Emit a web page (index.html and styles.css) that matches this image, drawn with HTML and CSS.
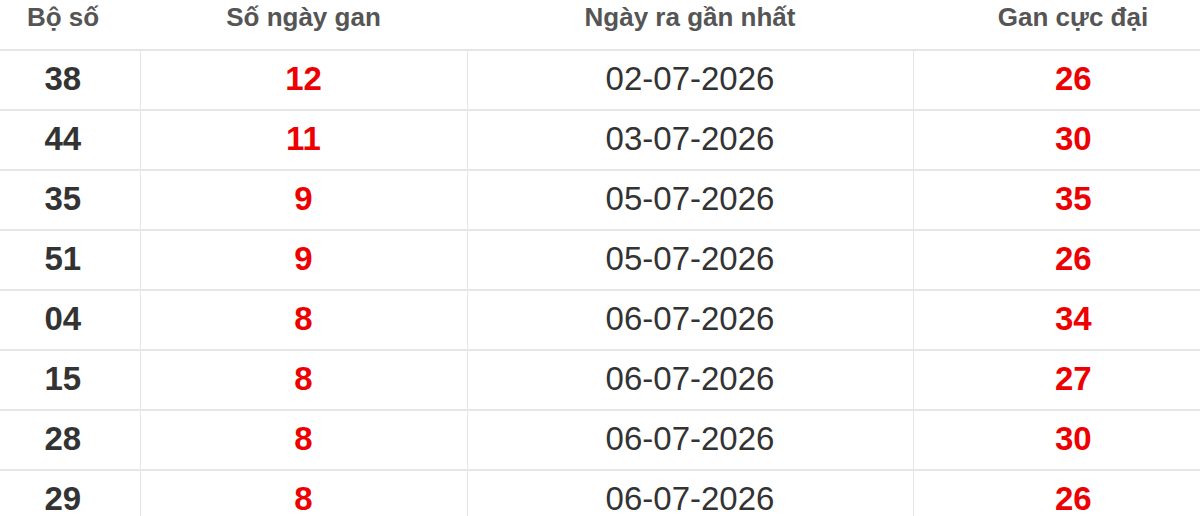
FILE: index.html
```html
<!DOCTYPE html>
<html>
<head>
<meta charset="utf-8">
<link rel="stylesheet" href="styles.css">
</head>
<body>
<div class="wrap">
<table class="gan">
  <thead>
    <tr><th class="c1">Bộ số</th><th class="c2">Số ngày gan</th><th class="c3">Ngày ra gần nhất</th><th class="c4">Gan cực đại</th></tr>
  </thead>
  <tbody>
    <tr><td class="num">38</td><td class="red">12</td><td class="date">02-07-2026</td><td class="red">26</td></tr>
    <tr><td class="num">44</td><td class="red">11</td><td class="date">03-07-2026</td><td class="red">30</td></tr>
    <tr><td class="num">35</td><td class="red">9</td><td class="date">05-07-2026</td><td class="red">35</td></tr>
    <tr><td class="num">51</td><td class="red">9</td><td class="date">05-07-2026</td><td class="red">26</td></tr>
    <tr><td class="num">04</td><td class="red">8</td><td class="date">06-07-2026</td><td class="red">34</td></tr>
    <tr><td class="num">15</td><td class="red">8</td><td class="date">06-07-2026</td><td class="red">27</td></tr>
    <tr><td class="num">28</td><td class="red">8</td><td class="date">06-07-2026</td><td class="red">30</td></tr>
    <tr><td class="num">29</td><td class="red">8</td><td class="date">06-07-2026</td><td class="red">26</td></tr>
  </tbody>
</table>
</div>
</body>
</html>
```

FILE: styles.css
```css
html, body {
  margin: 0;
  padding: 0;
  background: #fff;
  overflow: hidden;
}
.wrap {
  width: 1200px;
  height: 516px;
  overflow: hidden;
}
.gan {
  margin-left: -14px;
  width: 1247px;
  border-collapse: collapse;
  table-layout: fixed;
  font-family: "Liberation Sans", Arial, sans-serif;
}
.gan th {
  height: 50px;
  padding: 0 0 14px 0;
  font-size: 26px;
  font-weight: bold;
  color: #555;
  text-align: center;
  vertical-align: middle;
  border-bottom: 2px solid #e6e6e6;
  box-sizing: border-box;
}
.c1 { width: 154px; }
.c2 { width: 327px; }
.c3 { width: 446px; }
.c4 { width: 320px; }
.gan td {
  height: 56px;
  padding: 0 0 2px 0;
  text-align: center;
  vertical-align: middle;
  font-size: 33px;
  border-bottom: 2px solid #e6e6e6;
  border-left: 1px solid #e6e6e6;
}
.gan td:first-child { border-left: none; }
.num { font-weight: bold; color: #333; }
.red { font-weight: bold; color: #e00; }
.date { color: #333; }
```
